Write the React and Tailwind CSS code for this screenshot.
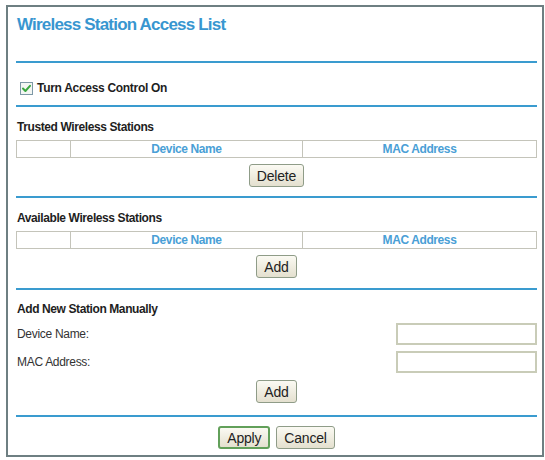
import React from 'react';

const font = { fontFamily: '"Liberation Sans", Arial, sans-serif' };

const Rule = () => <div className="h-[2px] bg-[#3a9bcf]" />;

const Btn = ({ children, primary, className = '' }) => (
  <button
    type="button"
    className={`h-[23px] rounded-[3px] bg-gradient-to-b from-[#fbfaf3] to-[#e4e0cf] px-[7px] text-[14px] leading-none text-[#222] tracking-[-0.2px] ${
      primary ? 'border-2 border-[#62a05a]' : 'border border-[#8f9c88]'
    } ${className}`}
  >
    {children}
  </button>
);

const StationTable = () => (
  <table className="w-full border-collapse border border-[#c4c4ba] text-[12px] font-bold tracking-[-0.4px] text-[#4a9fd6]">
    <tbody>
      <tr className="h-[17px]">
        <td className="w-[54px] border border-[#c4c4ba]" />
        <td className="w-[232px] border border-[#c4c4ba] text-center leading-none">Device Name</td>
        <td className="border border-[#c4c4ba] text-center leading-none">MAC Address</td>
      </tr>
    </tbody>
  </table>
);

const Heading = ({ children, className = '' }) => (
  <div className={`h-[14px] text-[12px] font-bold leading-[14px] tracking-[-0.4px] text-[#1e1e1e] ${className}`}>
    {children}
  </div>
);

const CheckBox = () => (
  <svg width="13" height="13" viewBox="0 0 13 13" className="shrink-0">
    <rect x="0.5" y="0.5" width="12" height="12" fill="#f3f6f3" stroke="#7d98a6" />
    <path d="M3 6.5 L5.4 9 L10 3.8" fill="none" stroke="#3aa83f" strokeWidth="2" strokeLinecap="round" strokeLinejoin="round" />
  </svg>
);

export default function App() {
  return (
    <div className="h-[460px] w-[545px] bg-white pl-[6px] pt-[5px]" style={font}>
      <div className="flex h-[452px] w-[538px] flex-col border-2 border-[#6e7f82] bg-white pl-[8px] pr-[5px]">
        <div className="h-[54px] pt-[8px] pl-[1px]">
          <h1 className="text-[17px] font-bold leading-[20px] tracking-[-0.8px] text-[#3896d0]">
            Wireless Station Access List
          </h1>
        </div>
        <Rule />

        <div className="flex h-[42px] items-center gap-[4px] pl-[4px] pt-[8px]">
          <CheckBox />
          <span className="text-[12px] font-bold tracking-[-0.3px] text-[#1e1e1e]">Turn Access Control On</span>
        </div>
        <Rule />

        <Heading className="mt-[13px] pl-[1px]">Trusted Wireless Stations</Heading>
        <div className="mt-[6px]">
          <StationTable />
        </div>
        <div className="mt-[6px] flex justify-center">
          <Btn>Delete</Btn>
        </div>
        <div className="mt-[9px]">
          <Rule />
        </div>

        <Heading className="mt-[13px] pl-[1px]">Available Wireless Stations</Heading>
        <div className="mt-[6px]">
          <StationTable />
        </div>
        <div className="mt-[6px] flex justify-center">
          <Btn>Add</Btn>
        </div>
        <div className="mt-[10px]">
          <Rule />
        </div>

        <Heading className="mt-[12px] pl-[1px]">Add New Station Manually</Heading>
        <div className="mt-[7px] flex items-center justify-between">
          <span className="pl-[1px] text-[12px] tracking-[-0.3px] text-[#333]">Device Name:</span>
          <input type="text" className="h-[22px] w-[141px] border-2 border-[#c9ccb8] bg-white" />
        </div>
        <div className="mt-[6px] flex items-center justify-between">
          <span className="pl-[1px] text-[12px] tracking-[-0.3px] text-[#333]">MAC Address:</span>
          <input type="text" className="h-[22px] w-[141px] border-2 border-[#c9ccb8] bg-white" />
        </div>
        <div className="mt-[7px] flex justify-center">
          <Btn>Add</Btn>
        </div>
        <div className="mt-[12px]">
          <Rule />
        </div>

        <div className="mt-[9px] flex justify-center gap-[6px]">
          <Btn primary>Apply</Btn>
          <Btn>Cancel</Btn>
        </div>
      </div>
    </div>
  );
}
